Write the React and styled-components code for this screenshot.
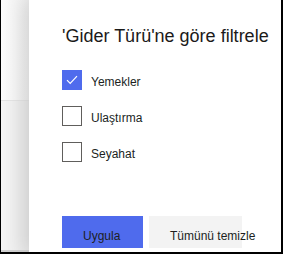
import React, { useState } from "react";
import styled, { createGlobalStyle } from "styled-components";

const GlobalStyle = createGlobalStyle`
  html, body {
    margin: 0;
    padding: 0;
    background: #ffffff;
  }
  body {
    font-family: "Liberation Sans", Arial, sans-serif;
    color: #201f1e;
  }
`;

const Frame = styled.div`
  width: 283px;
  height: 254px;
  box-sizing: border-box;
  border-left: 1px solid #000;
  border-right: 2px solid #000;
  border-bottom: 2px solid #000;
  display: flex;
  overflow: hidden;
`;

const Backdrop = styled.div`
  width: 28px;
  display: flex;
  flex-direction: column;
  border-bottom: 2px solid #cfcfcf;
`;

const BackdropBand = styled.div`
  height: ${(p) => p.$height || "auto"};
  flex: ${(p) => (p.$grow ? 1 : "none")};
  background: ${(p) => p.$bg};
  border-top: ${(p) => (p.$line ? "1px solid #e3e3e3" : "none")};
`;

const Panel = styled.div`
  flex: 1;
  background: #fff;
  position: relative;
  box-shadow: -6px 0 18px rgba(0, 0, 0, 0.1);
  padding: 27px 0 0 33px;
  display: flex;
  flex-direction: column;
`;

const Title = styled.h2`
  margin: 0;
  font-size: 18px;
  font-weight: 400;
  line-height: 18px;
  white-space: nowrap;
  color: #1b1a19;
`;

const Options = styled.div`
  display: flex;
  flex-direction: column;
  gap: 16px;
  margin-top: 25px;
`;

const Row = styled.label`
  display: flex;
  align-items: center;
  gap: 9px;
  font-size: 12px;
  cursor: pointer;
  height: 20px;
`;

const Box = styled.span`
  width: 20px;
  height: 20px;
  box-sizing: border-box;
  border: 1px solid ${(p) => (p.$checked ? "#4f6bed" : "#605e5c")};
  background: ${(p) => (p.$checked ? "#4f6bed" : "#fff")};
  display: flex;
  align-items: center;
  justify-content: center;
`;

const Label = styled.span`
  margin-top: 3px;
`;

const Actions = styled.div`
  display: flex;
  gap: 6px;
  margin-top: 54px;
`;

const Button = styled.button`
  width: ${(p) => p.$width}px;
  height: 32px;
  border: none;
  padding: 8px 0 0 21px;
  text-align: left;
  white-space: nowrap;
  overflow: visible;
  font-family: "Liberation Sans", Arial, sans-serif;
  font-size: 12px;
  color: #201f1e;
  background: ${(p) => (p.$primary ? "#4f6bed" : "#f3f3f3")};
  cursor: pointer;
`;

const options = ["Yemekler", "Ulaştırma", "Seyahat"];

export default function App() {
  const [checked, setChecked] = useState({ Yemekler: true });

  return (
    <>
      <GlobalStyle />
      <Frame>
        <Backdrop>
          <BackdropBand $height="100px" $bg="linear-gradient(90deg, #fcfcfc, #ececec)" />
          <BackdropBand $grow $line $bg="linear-gradient(90deg, #f5f5f5, #e7e7e7)" />
        </Backdrop>
        <Panel>
          <Title>'Gider Türü'ne göre filtrele</Title>
          <Options>
            {options.map((name) => (
              <Row
                key={name}
                onClick={() => setChecked((c) => ({ ...c, [name]: !c[name] }))}
              >
                <Box $checked={!!checked[name]}>
                  {checked[name] && (
                    <svg width="12" height="10" viewBox="0 0 12 10">
                      <path d="M1 5.2 L4.2 8.4 L11 1.2" fill="none" stroke="#fff" strokeWidth="1.2" />
                    </svg>
                  )}
                </Box>
                <Label>{name}</Label>
              </Row>
            ))}
          </Options>
          <Actions>
            <Button $primary $width={81}>Uygula</Button>
            <Button $width={93}>Tümünü temizle</Button>
          </Actions>
        </Panel>
      </Frame>
    </>
  );
}
